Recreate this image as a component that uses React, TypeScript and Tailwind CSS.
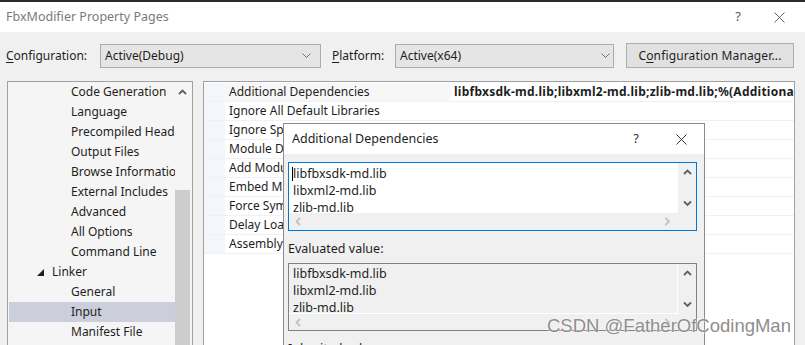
import React from "react";

const DownChevron = () => (
  <svg width="9" height="6" viewBox="0 0 9 6" className="shrink-0">
    <polyline points="0.5,0.5 4.5,4.5 8.5,0.5" fill="none" stroke="#6d6d6d" strokeWidth="1" />
  </svg>
);

const ScrollArrow = ({ dir, light }: { dir: "up" | "down" | "left" | "right"; light?: boolean }) => {
  const c = light ? "#c2c2c2" : "#606060";
  const pts: Record<string, string> = {
    up: "1,6 4.5,2.5 8,6",
    down: "1,2.5 4.5,6 8,2.5",
    left: "6,1 2.5,4.5 6,8",
    right: "2.5,1 6,4.5 2.5,8",
  };
  return (
    <svg width="9" height="9" viewBox="0 0 9 9">
      <polyline points={pts[dir]} fill="none" stroke={c} strokeWidth="1.8" />
    </svg>
  );
};

const CloseX = () => (
  <svg width="11" height="11" viewBox="0 0 11 11">
    <line x1="0.5" y1="0.5" x2="10.5" y2="10.5" stroke="#333" strokeWidth="1" />
    <line x1="10.5" y1="0.5" x2="0.5" y2="10.5" stroke="#333" strokeWidth="1" />
  </svg>
);

const treeItems: { label: string; level: number; expand?: boolean; selected?: boolean }[] = [
  { label: "Code Generation", level: 2 },
  { label: "Language", level: 2 },
  { label: "Precompiled Headers", level: 2 },
  { label: "Output Files", level: 2 },
  { label: "Browse Information", level: 2 },
  { label: "External Includes", level: 2 },
  { label: "Advanced", level: 2 },
  { label: "All Options", level: 2 },
  { label: "Command Line", level: 2 },
  { label: "Linker", level: 1, expand: true },
  { label: "General", level: 2 },
  { label: "Input", level: 2, selected: true },
  { label: "Manifest File", level: 2 },
];

const props: { name: string; value?: string }[] = [
  { name: "Additional Dependencies", value: "libfbxsdk-md.lib;libxml2-md.lib;zlib-md.lib;%(AdditionalDependencies)" },
  { name: "Ignore All Default Libraries" },
  { name: "Ignore Specific Default Libraries" },
  { name: "Module Definition File" },
  { name: "Add Module to Assembly" },
  { name: "Embed Managed Resource File" },
  { name: "Force Symbol References" },
  { name: "Delay Loaded Dlls" },
  { name: "Assembly Link Resource" },
];

const libs = ["libfbxsdk-md.lib", "libxml2-md.lib", "zlib-md.lib"];

export default function App() {
  return (
    <div className="relative w-[805px] h-[345px] overflow-hidden bg-[#f0f0f0] font-['Noto_Sans',sans-serif] text-[12px] text-[#1e1e1e]">
      <div className="h-[2px] bg-[#2b2b2b]" />
      {/* Title bar */}
      <div className="h-[30px] bg-white flex items-center pl-[6px] text-[#7a7a7a]">
        <span className="text-[12.5px]">FbxModifier Property Pages</span>
        <span className="ml-auto mr-[33px] text-[13px] text-[#555]">?</span>
        <span className="mr-[20px] flex items-center">
          <svg width="11" height="11" viewBox="0 0 11 11">
            <line x1="0.5" y1="0.5" x2="10.5" y2="10.5" stroke="#666" strokeWidth="1" />
            <line x1="10.5" y1="0.5" x2="0.5" y2="10.5" stroke="#666" strokeWidth="1" />
          </svg>
        </span>
      </div>
      {/* Toolbar */}
      <div className="h-[49px] flex items-start pt-[12px] pl-[6px]">
        <span className="w-[94px] h-[24px] flex items-center">
          <span className="underline underline-offset-2 decoration-1">C</span>onfiguration:
        </span>
        <div className="w-[221px] h-[24px] flex items-center border border-[#acacac] bg-[#e5e5e5] pl-[4px] pr-[9px]">
          <span className="flex-1">Active(Debug)</span>
          <DownChevron />
        </div>
        <span className="ml-[11px] w-[63px] h-[24px] flex items-center">
          <span className="underline underline-offset-2 decoration-1">P</span>latform:
        </span>
        <div className="w-[219px] h-[24px] flex items-center border border-[#acacac] bg-[#e5e5e5] pl-[4px] pr-[3px]">
          <span className="flex-1">Active(x64)</span>
          <DownChevron />
        </div>
        <div className="ml-[12px] w-[168px] h-[25px] -mt-[1px] flex items-center justify-center border border-[#adadad] bg-[#e1e1e1]">
          <span className="tracking-[0.15px]">
            C<span className="underline underline-offset-2 decoration-1">o</span>nfiguration Manager...
          </span>
        </div>
      </div>
      {/* Main */}
      <div className="flex items-start">
        {/* Tree */}
        <div className="ml-[7px] w-[186px] h-[270px] border border-[#a0a0a0] bg-[#f5f5f5] flex">
          <div className="w-[167px] overflow-hidden">
            {treeItems.map((it) => (
              <div
                key={it.label}
                className={
                  "h-[20px] flex items-center whitespace-nowrap ml-[1px] " +
                  (it.selected ? "bg-[#cccedb]" : "")
                }
              >
                {it.level === 1 ? (
                  <>
                    <span className="w-[28px]" />
                    <svg width="7" height="7" viewBox="0 0 7 7">
                      <polygon points="7,0 7,7 0,7" fill="#1e1e1e" />
                    </svg>
                    <span className="ml-[8px]">{it.label}</span>
                  </>
                ) : (
                  <span className="pl-[62px]">{it.label}</span>
                )}
              </div>
            ))}
          </div>
          <div className="w-[17px] flex flex-col">
            <div className="h-[20px] flex items-center justify-center pr-[2px]">
              <ScrollArrow dir="up" />
            </div>
            <div className="h-[88px]" />
            <div className="flex-1 bg-[#cdcdcd] w-[15px]" />
          </div>
        </div>
        {/* Property grid */}
        <div className="ml-[10px] w-[592px] h-[270px] border border-[#a0a0a0] bg-white pt-[1px] overflow-hidden">
          {props.map((p, i) => (
            <div key={p.name} className="h-[19px] flex border-b border-[#eef1f5]">
              <div className="w-[21px] bg-[#f3f6fa]" />
              <div className={"w-[225px] pl-[4px] flex items-center whitespace-nowrap overflow-hidden " + (i === 0 ? "bg-[#f7f7f7]" : "")}>
                {p.name}
              </div>
              <div className="flex-1 pl-[4px] flex items-center whitespace-nowrap overflow-hidden font-bold tracking-[0.25px]">
                {p.value}
              </div>
            </div>
          ))}
        </div>
      </div>

      {/* Dialog */}
      <div className="absolute left-[283px] top-[123px] w-[422px] h-[240px] border border-[#8c8c8c] bg-[#f0f0f0]">
        <div className="h-[30px] bg-white flex items-center pl-[8px]">
          <span className="text-[12.5px]">Additional Dependencies</span>
          <span className="ml-auto mr-[37px] text-[13px] text-[#333]">?</span>
          <span className="mr-[17px] flex items-center">
            <CloseX />
          </span>
        </div>
        <div className="pl-[4px] pt-[8px]">
          {/* editable box */}
          <div className="w-[409px] h-[69px] border border-[#0078d7] bg-[#f0f0f0] flex flex-col">
            <div className="flex h-[50px]">
              <div className="w-[389px] bg-white pl-[4px] pt-[2px] leading-[17px] text-[12.5px] overflow-hidden relative">
                <div className="absolute left-[3px] top-[4px] w-[1px] h-[14px] bg-black" />
                {libs.map((l) => (
                  <div key={l} className="h-[17px]">{l}</div>
                ))}
              </div>
              <div className="flex-1 flex flex-col items-center justify-between py-[5px]">
                <ScrollArrow dir="up" />
                <ScrollArrow dir="down" />
              </div>
            </div>
            <div className="flex-1 flex items-center justify-between pl-[5px] pr-[24px]">
              <ScrollArrow dir="left" light />
              <ScrollArrow dir="right" light />
            </div>
          </div>
          <div className="h-[32px] pt-[4px] flex items-center text-[12.5px]">Evaluated value:</div>
          <div className="w-[409px] h-[68px] border border-[#828282] bg-[#f0f0f0] flex flex-col">
            <div className="flex h-[50px]">
              <div className="w-[389px] border-r border-b border-white pl-[4px] pt-[1px] leading-[17px] text-[12.5px] overflow-hidden">
                {libs.map((l) => (
                  <div key={l} className="h-[17px]">{l}</div>
                ))}
              </div>
              <div className="flex-1 flex flex-col items-center justify-between py-[5px]">
                <ScrollArrow dir="up" />
                <ScrollArrow dir="down" />
              </div>
            </div>
            <div className="flex-1 flex items-center justify-between pl-[5px] pr-[24px]">
              <ScrollArrow dir="left" light />
              <ScrollArrow dir="right" light />
            </div>
          </div>
          <div className="mt-[9px] text-[12.5px] leading-[17px]">Inherited values:</div>
        </div>
      </div>

      {/* Watermark */}
      <div className="absolute left-[547px] top-[312px] font-['Liberation_Sans',sans-serif] text-[18.5px] tracking-[0px] text-[#8e8e8e] [text-shadow:0_0_2px_#ffffff,0_0_1px_#ffffff] whitespace-nowrap">
        CSDN @FatherOfCodingMan
      </div>
    </div>
  );
}
